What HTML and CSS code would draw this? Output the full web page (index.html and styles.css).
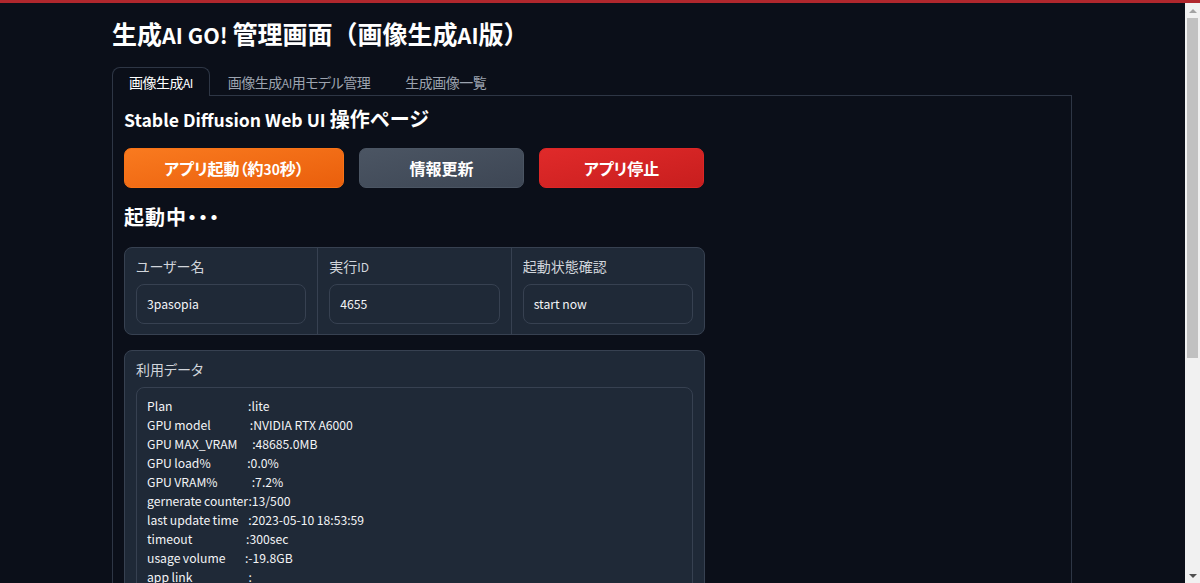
FILE: index.html
```html
<!DOCTYPE html>
<html lang="ja">
<head>
<meta charset="utf-8">
<title>生成AI GO! 管理画面（画像生成AI版）</title>
<link rel="stylesheet" href="styles.css">
</head>
<body>
<div class="topline"></div>
<div class="window">
  <div class="viewport">
    <div class="container">
      <h1 class="title">生成<span class="lt">AI GO! </span>管理画面（画像生成<span class="lt">AI</span>版）</h1>
      <div class="tabs">
        <div class="tab-nav">
          <button class="tab selected">画像生成<span class="lt">AI</span></button>
          <button class="tab">画像生成<span class="lt">AI</span>用モデル管理</button>
          <button class="tab">生成画像一覧</button>
        </div>
        <div class="tab-panel">
          <div class="left-col">
            <h2 class="heading"><span class="lt">Stable Diffusion Web UI </span>操作ページ</h2>
            <div class="btn-row">
              <button class="btn btn-primary">アプリ起動（約<span class="lt">30</span>秒）</button>
              <button class="btn btn-secondary">情報更新</button>
              <button class="btn btn-stop">アプリ停止</button>
            </div>
            <h2 class="heading status">起動中・・・</h2>
            <div class="info-group">
              <div class="info-col">
                <div class="label">ユーザー名</div>
                <div class="input">3pasopia</div>
              </div>
              <div class="info-col">
                <div class="label">実行<span class="lt">ID</span></div>
                <div class="input">4655</div>
              </div>
              <div class="info-col">
                <div class="label">起動状態確認</div>
                <div class="input">start now</div>
              </div>
            </div>
            <div class="data-block">
              <div class="label">利用データ</div>
              <div class="textarea">Plan                               :lite
GPU model                :NVIDIA RTX A6000
GPU MAX_VRAM      :48685.0MB
GPU load%               :0.0%
GPU VRAM%              :7.2%
gernerate counter:13/500
last update time    :2023-05-10 18:53:59
timeout                      :300sec
usage volume        :-19.8GB
app link                       :</div>
            </div>
          </div>
        </div>
      </div>
    </div>
  </div>
  <div class="scrollbar">
    <div class="sb-btn"><span class="arrow-up"></span></div>
    <div class="sb-track">
      <div class="sb-thumb"></div>
    </div>
    <div class="sb-btn"><span class="arrow-down"></span></div>
  </div>
</div>
</body>
</html>
```

FILE: styles.css
```css
* {
  box-sizing: border-box;
}

html, body {
  margin: 0;
  padding: 0;
  height: 100%;
  overflow: hidden;
  background: #0b0f19;
}

body {
  display: flex;
  flex-direction: column;
  font-family: "Noto Sans CJK JP", "Noto Sans", sans-serif;
  color: #f3f4f6;
}

.lt {
  font-size: 0.86em;
  line-height: 1;
}

.topline {
  height: 3px;
  flex: none;
  background: #b0272d;
}

.window {
  flex: 1;
  display: flex;
  min-height: 0;
}

.viewport {
  flex: 1;
  overflow: hidden;
  background: #0b0f19;
}

/* scrollbar */
.scrollbar {
  width: 15px;
  flex: none;
  display: flex;
  flex-direction: column;
  background: #f1f1f1;
}

.sb-btn {
  height: 15px;
  flex: none;
  display: flex;
  align-items: center;
  justify-content: center;
}

.arrow-up {
  width: 0;
  height: 0;
  border-left: 4px solid transparent;
  border-right: 4px solid transparent;
  border-bottom: 4px solid #a3a3a3;
}

.arrow-down {
  width: 0;
  height: 0;
  border-left: 4px solid transparent;
  border-right: 4px solid transparent;
  border-top: 4px solid #505050;
}

.sb-track {
  flex: 1;
  padding: 0 2px;
}

.sb-thumb {
  height: 340px;
  background: #c1c1c1;
}

/* page */
.container {
  width: 960px;
  margin-left: 112px;
  padding-top: 15px;
}

.title {
  margin: 0;
  font-size: 25px;
  line-height: 30px;
  font-weight: 700;
  color: #ffffff;
}

.tabs {
  margin-top: 19px;
}

.tab-nav {
  display: flex;
  height: 28px;
  position: relative;
  z-index: 1;
}

.tab {
  font-family: inherit;
  font-feature-settings: "palt";
  font-size: 14px;
  letter-spacing: -0.5px;
  background: transparent;
  border: 1px solid transparent;
  border-bottom: none;
  color: #9ca3af;
  padding: 0 16px;
  margin-right: 1px;
  height: 28px;
  line-height: 26px;
  border-radius: 8px 8px 0 0;
  cursor: pointer;
}

.tab.selected {
  color: #ffffff;
  border-color: #2e3645;
  background: #0b0f19;
  height: 29px;
}

.tab-panel {
  border: 1px solid #2e3645;
  border-bottom: none;
  padding: 10px 11px 0 11px;
  min-height: 840px;
}

.left-col {
  width: 581px;
}

.heading {
  margin: 0;
  font-size: 20px;
  line-height: 26px;
  font-weight: 700;
  color: #ffffff;
}

.heading .lt {
  font-size: 0.88em;
}

.btn-row {
  display: flex;
  gap: 15px;
  margin-top: 16px;
}

.btn {
  height: 40px;
  border-radius: 7px;
  font-family: inherit;
  font-feature-settings: "palt";
  font-size: 16px;
  font-weight: 600;
  color: #ffffff;
  cursor: pointer;
}

.btn-primary {
  width: 220px;
  background: linear-gradient(to bottom right, #f97a1f, #ea5f0c);
  border: 1px solid #f97316;
}

.btn-secondary {
  width: 165px;
  background: linear-gradient(to bottom right, #4b5563, #3d4654);
  border: 1px solid #4b5563;
}

.btn-stop {
  width: 165px;
  background: linear-gradient(to bottom right, #e02a2a, #c81e1e);
  border: 1px solid #dc2626;
}

.status {
  margin-top: 16px;
  font-feature-settings: "palt";
  letter-spacing: 1px;
}

.info-group {
  display: flex;
  margin-top: 17px;
  background: #1f2937;
  border: 1px solid #374151;
  border-radius: 8px;
}

.info-col {
  flex: 1;
  padding: 8px 11px 10px 11px;
}

.info-col + .info-col {
  border-left: 1px solid #374151;
}

.label {
  font-size: 14px;
  line-height: 20px;
  color: #d1d5db;
  margin-bottom: 8px;
  font-feature-settings: "palt";
}

.input {
  height: 40px;
  border: 1px solid #374151;
  border-radius: 8px;
  background: #1f2937;
  font-size: 12.2px;
  line-height: 38px;
  padding: 0 10px;
  color: #f3f4f6;
}

.data-block {
  margin-top: 15px;
  background: #1f2937;
  border: 1px solid #374151;
  border-radius: 8px;
  padding: 8px 11px 10px 11px;
}

.textarea {
  border: 1px solid #374151;
  border-radius: 8px;
  background: #1f2937;
  font-size: 12.2px;
  line-height: 19px;
  word-spacing: -0.29px;
  padding: 9px 10px;
  white-space: pre;
  color: #f3f4f6;
  min-height: 420px;
}
```
